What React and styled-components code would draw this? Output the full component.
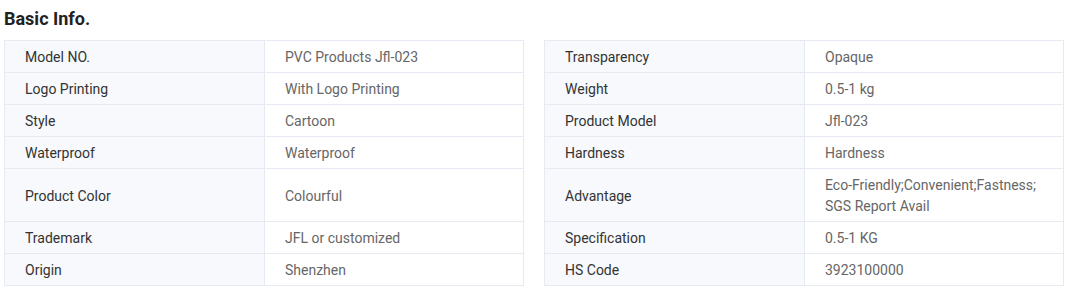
import React from 'react';
import styled, { createGlobalStyle } from 'styled-components';

const GlobalStyle = createGlobalStyle`
  body {
    margin: 0;
    background: #fff;
    font-family: Roboto, "Liberation Sans", Arial, sans-serif;
  }
`;

const Section = styled.section`
  width: 1077px;
  padding: 8px 4px 0 4px;
  box-sizing: border-box;
`;

const Title = styled.h2`
  margin: 0 0 11px;
  font-size: 18px;
  line-height: 21px;
  font-weight: 700;
  color: #222;
`;

const Grid = styled.div`
  display: grid;
  grid-template-columns: 520px 520px;
  column-gap: 20px;
`;

const Row = styled.div`
  display: grid;
  grid-template-columns: 260px 260px;
  border-left: 1px solid #e6eaf2;
  border-right: 1px solid #e6eaf2;
  border-bottom: 1px solid #e6eaf2;
  box-sizing: border-box;
  ${(p) => p.$first && 'border-top: 1px solid #e6eaf2;'}
`;

const Cell = styled.div`
  display: flex;
  align-items: center;
  padding: 6px 20px 4px;
  font-size: 14px;
  line-height: 21px;
  box-sizing: border-box;
`;

const Label = styled(Cell)`
  background: #f7f9fc;
  color: #333;
  border-right: 1px solid #e6eaf2;
`;

const Value = styled(Cell)`
  color: #666;
`;

const left = [
  ['Model NO.', 'PVC Products Jfl-023'],
  ['Logo Printing', 'With Logo Printing'],
  ['Style', 'Cartoon'],
  ['Waterproof', 'Waterproof'],
  ['Product Color', 'Colourful'],
  ['Trademark', 'JFL or customized'],
  ['Origin', 'Shenzhen'],
];

const right = [
  ['Transparency', 'Opaque'],
  ['Weight', '0.5-1 kg'],
  ['Product Model', 'Jfl-023'],
  ['Hardness', 'Hardness'],
  ['Advantage', 'Eco-Friendly;Convenient;Fastness; SGS Report Avail'],
  ['Specification', '0.5-1 KG'],
  ['HS Code', '3923100000'],
];

export default function App() {
  return (
    <>
      <GlobalStyle />
      <Section>
        <Title>Basic Info.</Title>
        <Grid>
          {left.map((l, i) => (
            <React.Fragment key={i}>
              <Row $first={i === 0}>
                <Label>{l[0]}</Label>
                <Value>{l[1]}</Value>
              </Row>
              <Row $first={i === 0}>
                <Label>{right[i][0]}</Label>
                <Value>{right[i][1]}</Value>
              </Row>
            </React.Fragment>
          ))}
        </Grid>
      </Section>
    </>
  );
}
